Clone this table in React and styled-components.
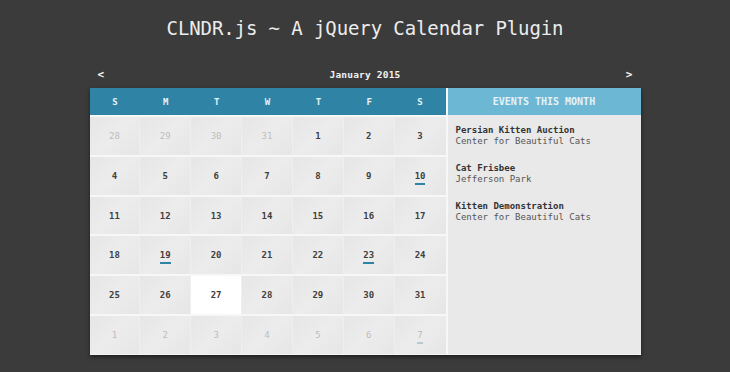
import React from 'react';
import styled, { createGlobalStyle } from 'styled-components';

const GlobalStyle = createGlobalStyle`
    html, body {
        margin: 0;
        padding: 0;
        background: #3b3b3b;
    }
    body {
        font-family: "DejaVu Sans Mono", "Liberation Mono", monospace;
    }
`;

const days = ['S', 'M', 'T', 'W', 'T', 'F', 'S'];

const weeks = [
    [[28, 'adj'], [29, 'adj'], [30, 'adj'], [31, 'adj'], [1], [2], [3]],
    [[4], [5], [6], [7], [8], [9], [10, 'event']],
    [[11], [12], [13], [14], [15], [16], [17]],
    [[18], [19, 'event'], [20], [21], [22], [23, 'event'], [24]],
    [[25], [26], [27, 'today'], [28], [29], [30], [31]],
    [[1, 'adj'], [2, 'adj'], [3, 'adj'], [4, 'adj'], [5, 'adj'], [6, 'adj'], [7, 'adjevent']],
];

const events = [
    { title: 'Persian Kitten Auction', location: 'Center for Beautiful Cats' },
    { title: 'Cat Frisbee', location: 'Jefferson Park' },
    { title: 'Kitten Demonstration', location: 'Center for Beautiful Cats' },
];

function App() {
    return (
        <Page>
            <GlobalStyle />
            <Title>CLNDR.js ~ A jQuery Calendar Plugin</Title>
            <Controls>
                <Arrow>&lt;</Arrow>
                <Month>January 2015</Month>
                <Arrow>&gt;</Arrow>
            </Controls>
            <Calendar>
                <DaysGrid>
                    {days.map((d, i) => (
                        <DayHead key={'h' + i}>{d}</DayHead>
                    ))}
                    {weeks.flat().map(([n, kind], i) => (
                        <Day key={i} $today={kind === 'today'} $last={i % 7 === 6}>
                            <DayNum
                                $adjacent={kind === 'adj' || kind === 'adjevent'}
                                $event={kind === 'event' || kind === 'adjevent'}
                            >
                                {n}
                            </DayNum>
                        </Day>
                    ))}
                </DaysGrid>
                <Events>
                    <EventsHead>EVENTS THIS MONTH</EventsHead>
                    <EventList>
                        {events.map((e, i) => (
                            <Event key={i}>
                                <EventTitle>{e.title}</EventTitle>
                                <EventLocation>{e.location}</EventLocation>
                            </Event>
                        ))}
                    </EventList>
                </Events>
            </Calendar>
        </Page>
    );
}

const Page = styled.div`
    width: 730px;
    height: 372px;
    padding-top: 15px;
    box-sizing: border-box;
    display: flex;
    flex-direction: column;
    align-items: center;
`;

const Title = styled.h1`
    margin: 0;
    font-family: "DejaVu Sans Mono", monospace;
    font-weight: normal;
    font-size: 19px;
    line-height: 26px;
    color: #ececec;
    letter-spacing: -0.1px;
`;

const Controls = styled.div`
    width: 551px;
    margin-top: 26px;
    padding: 0 8px;
    box-sizing: border-box;
    display: flex;
    justify-content: space-between;
    align-items: center;
    height: 14px;
    margin-bottom: 7px;
    color: #f2f2f2;
    font-weight: bold;
    font-size: 9px;
`;

const Arrow = styled.span`
    font-size: 11px;
    font-weight: bold;
    cursor: pointer;
`;

const Month = styled.span`
    font-size: 9.5px;
    letter-spacing: 0.2px;
`;

const Calendar = styled.div`
    width: 551px;
    height: 266px;
    display: flex;
    background: #e9e9e9;
    box-shadow: 0 2px 4px rgba(0, 0, 0, 0.5);
    border-bottom: 1px solid #f4f4f4;
`;

const DaysGrid = styled.div`
    width: 356px;
    display: grid;
    grid-template-columns: repeat(7, 1fr);
    grid-template-rows: 27px repeat(6, 1fr);
`;

const DayHead = styled.div`
    background: #2f84a6;
    color: #e6f2f7;
    font-weight: bold;
    font-size: 9px;
    display: flex;
    align-items: center;
    justify-content: center;
`;

const Day = styled.div`
    display: flex;
    align-items: center;
    justify-content: center;
    background: ${p => (p.$today ? '#ffffff' : 'linear-gradient(135deg, #e6e6e6 0%, #ececec 50%, #e6e6e6 100%)')};
    border-top: 2px solid #f7f7f7;
    border-right: ${p => (p.$last ? 'none' : '1px solid #efefef')};
`;

const DayNum = styled.span`
    position: relative;
    font-size: 9px;
    font-weight: bold;
    color: ${p => (p.$adjacent ? '#bdbdbd' : '#3f3f3f')};
    ${p => p.$adjacent && 'font-weight: normal;'}

    &::after {
        content: '';
        display: ${p => (p.$event ? 'block' : 'none')};
        position: absolute;
        left: 0;
        right: 0;
        bottom: -4px;
        height: 2px;
        background: ${p => (p.$adjacent ? '#b8c8ce' : '#2f84a6')};
    }
`;

const Events = styled.div`
    flex: 1;
    border-left: 2px solid #f7f7f7;
    display: flex;
    flex-direction: column;
`;

const EventsHead = styled.div`
    height: 27px;
    background: #6cb8d4;
    color: #e4f3f8;
    font-weight: bold;
    font-size: 10px;
    display: flex;
    align-items: center;
    justify-content: center;
`;

const EventList = styled.div`
    padding: 10px 8px 0;
    display: flex;
    flex-direction: column;
    gap: 16px;
`;

const Event = styled.div`
    font-size: 9px;
    line-height: 11px;
`;

const EventTitle = styled.div`
    font-weight: bold;
    color: #333;
`;

const EventLocation = styled.div`
    color: #555;
`;

export default App;
